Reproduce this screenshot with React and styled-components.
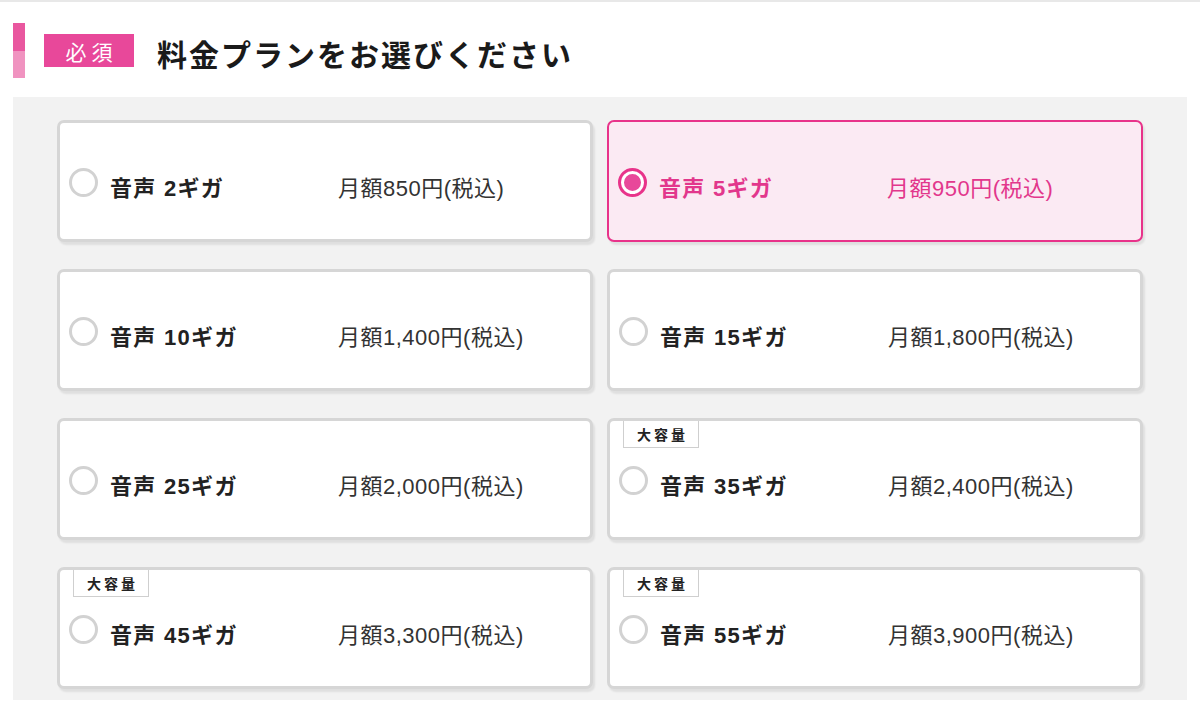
import styled, { createGlobalStyle } from "styled-components";

const GlobalStyle = createGlobalStyle`
  body {
    margin: 0;
    background: #fff;
    font-family: "Liberation Sans", "Noto Sans CJK JP", sans-serif;
  }
`;

const Page = styled.div`
  border-top: 2px solid #e8e8e8;
  padding: 0 13px;
`;

const Header = styled.div`
  display: flex;
  align-items: center;
  height: 55px;
  margin-top: 21px;
  margin-bottom: 19px;
`;

const Bar = styled.div`
  width: 12px;
  height: 100%;
  background: linear-gradient(#e9579f 0 50%, #f093c0 50% 100%);
`;

const Required = styled.span`
  margin-left: 19px;
  width: 90px;
  height: 33px;
  display: flex;
  align-items: center;
  justify-content: center;
  background: #e8489a;
  color: #fff;
  font-family: "Noto Sans CJK JP", sans-serif;
  font-size: 21px;
  letter-spacing: 5px;
  text-indent: 5px;
`;

const Title = styled.h1`
  margin: 4px 0 0 23px;
  font-family: "Noto Sans CJK JP", sans-serif;
  font-size: 30px;
  font-weight: 700;
  letter-spacing: 2px;
  color: #1a1a1a;
`;

const Panel = styled.div`
  background: #f2f2f2;
  padding: 23px 44px 11px;
  display: grid;
  grid-template-columns: 1fr 1fr;
  column-gap: 14px;
  row-gap: 27px;
`;

const Card = styled.label`
  position: relative;
  box-sizing: border-box;
  height: 122px;
  display: flex;
  align-items: center;
  padding: 10px 0 0 9px;
  border-radius: 7px;
  background: ${(p) => (p.$active ? "#fbeaf3" : "#fff")};
  border: ${(p) => (p.$active ? "2px solid #e8338a" : "3px solid #d6d6d6")};
  box-shadow: 2px 3px 2px rgba(0, 0, 0, 0.08);
  color: ${(p) => (p.$active ? "#e2378c" : "#222")};
  cursor: pointer;
`;

const Radio = styled.span`
  box-sizing: border-box;
  flex: none;
  width: 29px;
  height: 29px;
  border-radius: 50%;
  background: #fff;
  border: 3px solid ${(p) => (p.$active ? "#e8338a" : "#d2d2d2")};
  margin-top: -8px;
  ${(p) => p.$active && "box-shadow: inset 0 0 0 3px #fff, inset 0 0 0 20px #e8489a;"}
`;

const Name = styled.span`
  margin-left: 12px;
  width: 228px;
  font-size: 22px;
  font-weight: 700;
  letter-spacing: 1.3px;
`;

const Price = styled.span`
  font-size: 22px;
  letter-spacing: 0.5px;
  color: ${(p) => (p.$active ? "#e2378c" : "#333")};
`;

const Tag = styled.span`
  position: absolute;
  top: 0;
  left: 13px;
  width: 76px;
  height: 27px;
  box-sizing: border-box;
  border: 1px solid #cfcfcf;
  border-top: none;
  background: #fff;
  display: flex;
  align-items: center;
  justify-content: center;
  font-family: "Noto Sans CJK JP", sans-serif;
  font-size: 14px;
  font-weight: 700;
  letter-spacing: 3px;
  text-indent: 3px;
  color: #222;
`;

const plans = [
  { giga: 2, price: "850" },
  { giga: 5, price: "950", active: true },
  { giga: 10, price: "1,400" },
  { giga: 15, price: "1,800" },
  { giga: 25, price: "2,000" },
  { giga: 35, price: "2,400", big: true },
  { giga: 45, price: "3,300", big: true },
  { giga: 55, price: "3,900", big: true },
];

export default function App() {
  return (
    <Page>
      <GlobalStyle />
      <Header>
        <Bar />
        <Required>必須</Required>
        <Title>料金プランをお選びください</Title>
      </Header>
      <Panel>
        {plans.map((p) => (
          <Card key={p.giga} $active={p.active}>
            {p.big && <Tag>大容量</Tag>}
            <Radio $active={p.active} />
            <Name>音声 {p.giga}ギガ</Name>
            <Price $active={p.active}>月額{p.price}円(税込)</Price>
          </Card>
        ))}
      </Panel>
    </Page>
  );
}
